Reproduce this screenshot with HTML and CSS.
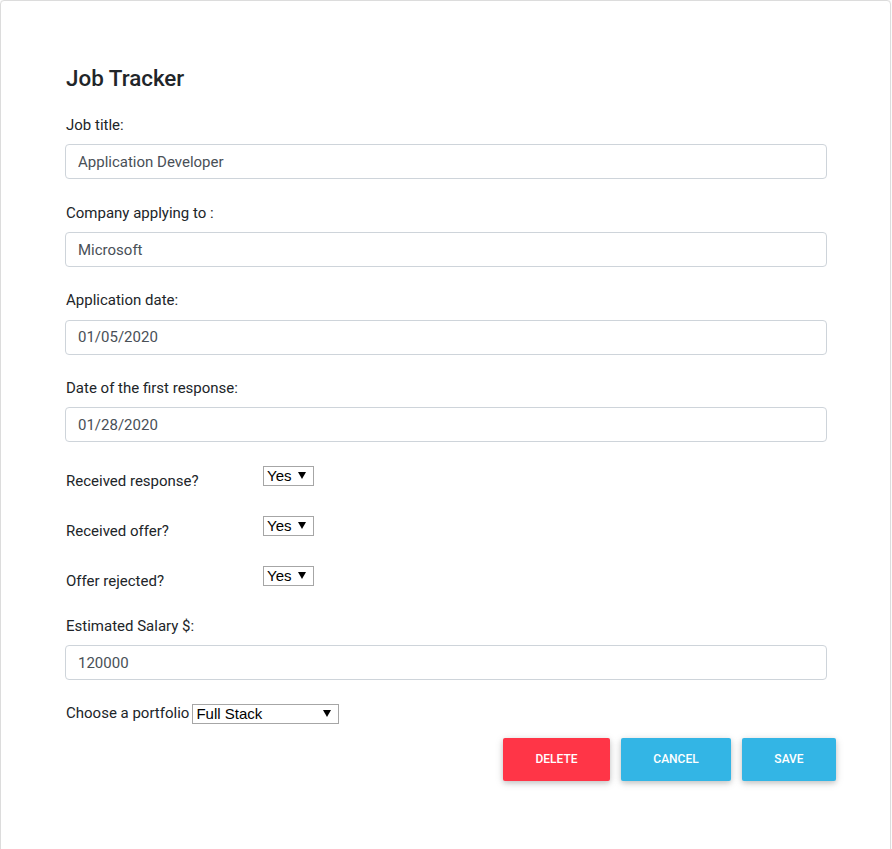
FILE: index.html
```html
<!DOCTYPE html>
<html>
<head>
<meta charset="utf-8">
<title>Job Tracker</title>
<link rel="stylesheet" href="styles.css">
</head>
<body>
<div class="card">
  <form class="form">
    <h2 class="title">Job Tracker</h2>

    <div class="group">
      <label class="label">Job title:</label>
      <input class="input" type="text" value="Application Developer">
    </div>
    <div class="group">
      <label class="label">Company applying to :</label>
      <input class="input" type="text" value="Microsoft">
    </div>
    <div class="group">
      <label class="label">Application date:</label>
      <input class="input" type="text" value="01/05/2020">
    </div>
    <div class="group">
      <label class="label">Date of the first response:</label>
      <input class="input" type="text" value="01/28/2020">
    </div>

    <div class="row">
      <label class="row-label">Received response?</label>
      <select class="sel sel-small"><option>Yes</option><option>No</option></select>
    </div>
    <div class="row">
      <label class="row-label">Received offer?</label>
      <select class="sel sel-small"><option>Yes</option><option>No</option></select>
    </div>
    <div class="row">
      <label class="row-label">Offer rejected?</label>
      <select class="sel sel-small"><option>Yes</option><option>No</option></select>
    </div>

    <div class="group">
      <label class="label">Estimated Salary $:</label>
      <input class="input" type="text" value="120000">
    </div>

    <div class="portfolio">
      <label class="port-label">Choose a portfolio</label>
      <select class="sel sel-wide"><option>Full Stack</option><option>Front End</option><option>Back End</option></select>
    </div>

    <div class="actions">
      <button type="button" class="btn btn-danger">Delete</button>
      <button type="button" class="btn btn-info">Cancel</button>
      <button type="button" class="btn btn-info">Save</button>
    </div>
  </form>
</div>
</body>
</html>
```

FILE: styles.css
```css
* { box-sizing: border-box; }

html, body {
  margin: 0;
  padding: 0;
  background: #fff;
}

body {
  font-family: Roboto, "Liberation Sans", sans-serif;
  font-size: 15px;
  color: #212529;
  line-height: 1.5;
}

.card {
  margin: 0 1px 0 0;
  min-height: 870px;
  border: 1px solid #dcdcdc;
  border-radius: 4px;
  box-shadow: 0 0 1px rgba(0, 0, 0, 0.12);
  padding: 64px 64px 40px 64px;
}

.form {
  width: 762px;
}

.title {
  margin: 0 0 23px 1px;
  font-size: 22.4px;
  font-weight: 500;
  line-height: 1.2;
  color: #212529;
}

.group {
  margin-bottom: 23.2px;
}

.label {
  display: block;
  margin: 0 0 8.5px 1px;
  line-height: 21px;
}

.input {
  display: block;
  width: 100%;
  height: 35px;
  padding: 6px 12px;
  font-family: Roboto, "Liberation Sans", sans-serif;
  font-size: 15px;
  color: #495057;
  background: #fff;
  border: 1px solid #ced4da;
  border-radius: 4px;
  outline: none;
}

.row {
  display: flex;
  align-items: flex-start;
  height: 26.5px;
  margin-bottom: 23.5px;
}

.row-label {
  width: 198px;
  padding-left: 1px;
  padding-top: 5.5px;
  line-height: 21px;
}

.sel {
  -webkit-appearance: none;
  appearance: none;
  height: 20px;
  padding: 0 0 0 3px;
  font-family: "Liberation Sans", Arial, sans-serif;
  font-size: 15px;
  line-height: 18px;
  color: #000;
  background-color: #fff;
  background-image: url("data:image/svg+xml;utf8,<svg xmlns='http://www.w3.org/2000/svg' width='8' height='7'><path d='M0 0 L8 0 L4 7 Z' fill='black'/></svg>");
  background-repeat: no-repeat;
  background-position: right 7px center;
  border: 1px solid #a6a6a6;
  border-radius: 0;
  outline: none;
}

.sel-small { width: 51px; }
.sel-wide { width: 147px; }

.portfolio {
  display: flex;
  align-items: flex-start;
  height: 21px;
  margin-bottom: 13.5px;
}

.port-label {
  padding-left: 1px;
  line-height: 21px;
  margin-right: 3px;
}

.portfolio .sel {
  margin-top: 0.5px;
}

.actions {
  display: flex;
  justify-content: flex-end;
  gap: 11px;
  margin-right: -9px;
}

.btn {
  height: 43px;
  padding: 0 20px;
  border: none;
  border-radius: 2px;
  font-family: Roboto, "Liberation Sans", sans-serif;
  font-size: 12px;
  font-weight: 500;
  text-transform: uppercase;
  color: #fff;
  box-shadow: 0 2px 5px 0 rgba(0, 0, 0, 0.16), 0 2px 10px 0 rgba(0, 0, 0, 0.12);
  cursor: pointer;
}

.btn-danger { background: #ff3547; width: 107px; }
.btn-info { background: #33b5e5; }
.btn-info:nth-child(2) { width: 110px; }
.btn-info:nth-child(3) { width: 94px; }
```
